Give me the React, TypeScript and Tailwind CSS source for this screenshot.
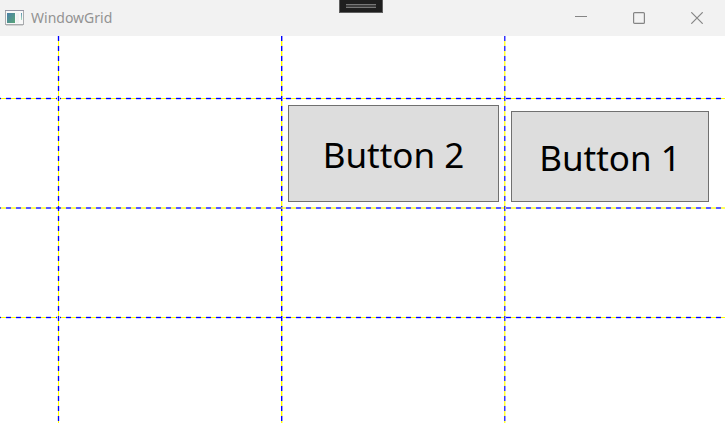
import React from "react";

const rowLines = [
  { place: "row-start-1", tone: "h-[3px] -mb-px", core: "h-px", halo: true },
  { place: "row-start-2", tone: "h-[2px] opacity-65", core: "h-[2px]", halo: false },
  { place: "row-start-3", tone: "h-[3px] -mb-px", core: "h-px", halo: true },
];

const columnLines = [
  { place: "col-start-1", tone: "w-[3px] -mr-px", core: "w-px", halo: "both" },
  { place: "col-start-2", tone: "w-[2px] -mr-px", core: "w-px", halo: "right" },
  { place: "col-start-3", tone: "w-[2px] -mr-px", core: "w-px opacity-80", halo: "right" },
];

const rowDashes =
  "bg-[repeating-linear-gradient(90deg,#0000ff_0_1px,#ffff00_1px_6px,#0000ff_6px_10px)]";
const rowHalo =
  "bg-[repeating-linear-gradient(90deg,#d5d5ff_0_1px,transparent_1px_6px,#d5d5ff_6px_10px)]";
const columnDashes =
  "bg-[repeating-linear-gradient(180deg,#0000ff_0_5px,#ffff00_5px_10px)]";
const columnHalo =
  "bg-[repeating-linear-gradient(180deg,#d5d5ff_0_5px,transparent_5px_10px)]";
const columnEdge =
  "bg-[repeating-linear-gradient(180deg,#9999ff_0_5px,#ffff99_5px_10px)]";

function RowLine({ place, tone, core, halo }: (typeof rowLines)[number]) {
  return (
    <div aria-hidden="true" className={`${place} ${tone} col-span-full col-start-1 flex flex-col self-end`}>
      {halo && <span className={`h-px ${rowHalo}`} />}
      <span className={`${core} ${rowDashes}`} />
      {halo && <span className={`h-px ${rowHalo}`} />}
    </div>
  );
}

function ColumnLine({ place, tone, core, halo }: (typeof columnLines)[number]) {
  return (
    <div aria-hidden="true" className={`${place} ${tone} row-start-1 row-end-5 flex justify-self-end`}>
      {halo === "both" && <span className={`w-px ${columnHalo}`} />}
      <span className={`${core} ${columnDashes}`} />
      {halo === "both" ? (
        <span className={`w-px ${columnHalo}`} />
      ) : (
        <span className={`w-px ${columnEdge}`} />
      )}
    </div>
  );
}

function AppIcon() {
  return (
    <svg width="19" height="16" viewBox="0 0 19 16" aria-hidden="true">
      <defs>
        <linearGradient id="pane" x1="0" y1="0" x2="1" y2="1">
          <stop offset="0" stopColor="#4a7fa8" />
          <stop offset="1" stopColor="#58a578" />
        </linearGradient>
        <linearGradient id="strip" x1="0" y1="0" x2="0" y2="1">
          <stop offset="0" stopColor="#5e93b0" />
          <stop offset="1" stopColor="#a9dcc0" />
        </linearGradient>
      </defs>
      <rect x="0.5" y="0.5" width="18" height="14" fill="#f8f8f8" stroke="#a9abae" />
      <path d="M0 0.5h19" stroke="#9495a5" />
      <path d="M1 15.5h17" stroke="#d2d2d2" />
      <rect x="2" y="3" width="8" height="10" fill="url(#pane)" />
      <rect x="11" y="3" width="3" height="10" fill="#f0f1f2" />
      <rect x="16" y="3" width="1" height="7" fill="url(#strip)" />
    </svg>
  );
}

const caption = "flex h-9 w-[58px] items-center justify-center text-[#858585]";
const gridButton =
  "row-start-2 mb-[7px] ml-1.5 border border-[#707070] bg-[#dddddd] pt-1 text-[35px] text-black";

export default function App() {
  return (
    <div className="flex h-screen flex-col overflow-hidden bg-white font-['Noto_Sans','Open_Sans',sans-serif]">
      <header className="relative flex h-9 shrink-0 items-center justify-between bg-[#f2f2f2] pl-[5px]">
        <div className="flex items-center gap-[7px]">
          <AppIcon />
          <h1 className="text-sm leading-5 text-[#929292]">WindowGrid</h1>
        </div>
        <button
          type="button"
          aria-label="Debug toolbar"
          className="absolute top-0 left-1/2 -ml-6 flex h-[13px] w-11 flex-col items-center border-x border-b border-[#5f5f5f] bg-[#1f1f1f] pt-1"
        >
          <span className="h-1 w-[30px] border-y border-[#777777] bg-[#3d3d3d]" />
        </button>
        <div className="-mr-px flex">
          <button type="button" aria-label="Minimize" className={caption}>
            <svg width="12" height="12" viewBox="0 0 12 12" fill="none" stroke="currentColor">
              <path d="M0 4.5h12" />
            </svg>
          </button>
          <button type="button" aria-label="Maximize" className={caption}>
            <svg width="12" height="12" viewBox="0 0 12 12" fill="none" stroke="currentColor" strokeWidth="1.2">
              <rect x="0.6" y="0.6" width="10.8" height="10.8" rx="1" />
            </svg>
          </button>
          <button type="button" aria-label="Close" className={caption}>
            <svg width="12" height="12" viewBox="0 0 12 12" fill="none" stroke="currentColor" strokeWidth="1.2">
              <path d="M0.3 0.3l11.4 11.4M11.7 0.3L0.3 11.7" />
            </svg>
          </button>
        </div>
      </header>
      <main className="grid flex-1 grid-cols-[59px_223px_223px_1fr] grid-rows-[63px_110px_109px_1fr]">
        {rowLines.map((line) => (
          <RowLine key={line.place} {...line} />
        ))}
        {columnLines.map((line) => (
          <ColumnLine key={line.place} {...line} />
        ))}
        <button type="button" className={`${gridButton} col-start-3 mt-1.5 mr-1.5`}>
          Button 2
        </button>
        <button type="button" className={`${gridButton} col-start-4 mt-3 mr-4`}>
          Button 1
        </button>
      </main>
    </div>
  );
}
